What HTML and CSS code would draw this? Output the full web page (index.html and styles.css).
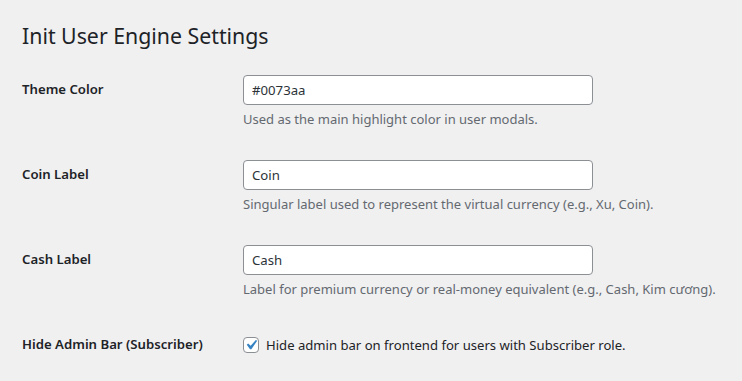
FILE: index.html
```html
<!DOCTYPE html>
<html lang="en">
<head>
  <meta charset="UTF-8">
  <title>Init User Engine Settings</title>
  <link rel="stylesheet" href="styles.css">
</head>
<body>

<div class="wrap">
  <h1>Init User Engine Settings</h1>

  <form class="settings">
    <div class="row">
      <label class="row-label" for="theme_color">Theme Color</label>
      <div class="row-field">
        <input type="text" id="theme_color" class="text-input" value="#0073aa">
        <p class="description">Used as the main highlight color in user modals.</p>
      </div>
    </div>

    <div class="row">
      <label class="row-label" for="coin_label">Coin Label</label>
      <div class="row-field">
        <input type="text" id="coin_label" class="text-input" value="Coin">
        <p class="description">Singular label used to represent the virtual currency (e.g., Xu, Coin).</p>
      </div>
    </div>

    <div class="row">
      <label class="row-label" for="cash_label">Cash Label</label>
      <div class="row-field">
        <input type="text" id="cash_label" class="text-input" value="Cash">
        <p class="description">Label for premium currency or real-money equivalent (e.g., Cash, Kim cương).</p>
      </div>
    </div>

    <div class="row">
      <span class="row-label">Hide Admin Bar (Subscriber)</span>
      <div class="row-field">
        <label class="check">
          <span class="box">
            <svg viewBox="0 0 20 20" width="20" height="20"><path d="M14.83 4.89l1.34.94-5.81 8.38H9.02L5.78 9.67l1.34-1.25 2.57 2.4z" fill="#3582c4"/></svg>
          </span>
          Hide admin bar on frontend for users with Subscriber role.
        </label>
      </div>
    </div>
  </form>
</div>

</body>
</html>
```

FILE: styles.css
```css
body {
  margin: 0;
  background: #f0f0f1;
  color: #1d2327;
  font-family: "Noto Sans", sans-serif;
  font-size: 13px;
}
.wrap {
  padding: 21px 0 0 22px;
}
h1 {
  margin: 0 0 9px;
  font-size: 21.3px;
  font-weight: 400;
  line-height: 30px;
}
.row {
  display: flex;
  height: 85px;
}
.row-label {
  width: 221px;
  padding-top: 20px;
  font-size: 13.2px;
  font-weight: 600;
  line-height: 18px;
}
.row-field {
  padding-top: 15px;
}
.text-input {
  box-sizing: border-box;
  width: 350px;
  height: 30px;
  margin: 0;
  padding: 0 8px;
  border: 1px solid #8c8f94;
  border-radius: 4px;
  background: #fff;
  color: #2c3338;
  font-family: inherit;
  font-size: 13.2px;
}
.description {
  margin: 4px 0 0;
  color: #646970;
  font-size: 13px;
  line-height: 21px;
}
.check {
  display: flex;
  align-items: center;
  gap: 7px;
  margin-top: 6px;
  font-size: 13.1px;
  line-height: 18px;
}
.box {
  box-sizing: border-box;
  width: 16px;
  height: 16px;
  border: 1px solid #8c8f94;
  border-radius: 4px;
  background: #fff;
  display: flex;
  align-items: center;
  justify-content: center;
}
.box svg {
  width: 20px;
  height: 20px;
  flex: none;
  margin: -3px;
}
```
